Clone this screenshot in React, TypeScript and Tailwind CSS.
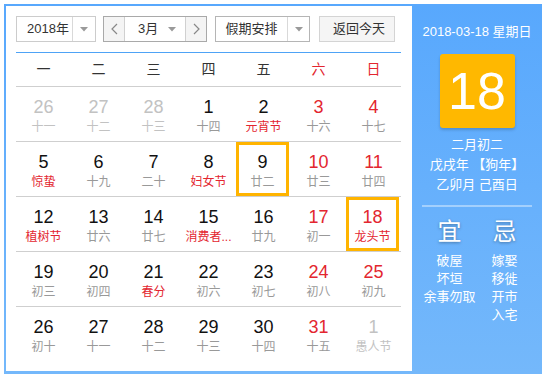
import React from "react";

type Day = {
  num: number;
  lunar: string;
  other?: boolean;
  redNum?: boolean;
  redLunar?: boolean;
  boxed?: boolean;
};

const WEEKDAYS = ["一", "二", "三", "四", "五", "六", "日"];

const ROWS: Day[][] = [
  [
    { num: 26, lunar: "十一", other: true },
    { num: 27, lunar: "十二", other: true },
    { num: 28, lunar: "十三", other: true },
    { num: 1, lunar: "十四" },
    { num: 2, lunar: "元宵节", redLunar: true },
    { num: 3, lunar: "十六", redNum: true },
    { num: 4, lunar: "十七", redNum: true },
  ],
  [
    { num: 5, lunar: "惊蛰", redLunar: true },
    { num: 6, lunar: "十九" },
    { num: 7, lunar: "二十" },
    { num: 8, lunar: "妇女节", redLunar: true },
    { num: 9, lunar: "廿二", boxed: true },
    { num: 10, lunar: "廿三", redNum: true },
    { num: 11, lunar: "廿四", redNum: true },
  ],
  [
    { num: 12, lunar: "植树节", redLunar: true },
    { num: 13, lunar: "廿六" },
    { num: 14, lunar: "廿七" },
    { num: 15, lunar: "消费者...", redLunar: true },
    { num: 16, lunar: "廿九" },
    { num: 17, lunar: "初一", redNum: true },
    { num: 18, lunar: "龙头节", redNum: true, redLunar: true, boxed: true },
  ],
  [
    { num: 19, lunar: "初三" },
    { num: 20, lunar: "初四" },
    { num: 21, lunar: "春分", redLunar: true },
    { num: 22, lunar: "初六" },
    { num: 23, lunar: "初七" },
    { num: 24, lunar: "初八", redNum: true },
    { num: 25, lunar: "初九", redNum: true },
  ],
  [
    { num: 26, lunar: "初十" },
    { num: 27, lunar: "十一" },
    { num: 28, lunar: "十二" },
    { num: 29, lunar: "十三" },
    { num: 30, lunar: "十四" },
    { num: 31, lunar: "十五", redNum: true },
    { num: 1, lunar: "愚人节", other: true },
  ],
];

function Caret() {
  return (
    <svg width="8" height="5" viewBox="0 0 8 5">
      <polygon points="0,0 8,0 4,4.5" fill="#9a9a9a" />
    </svg>
  );
}

function Chevron({ dir }: { dir: "left" | "right" }) {
  return (
    <svg width="7" height="12" viewBox="0 0 7 12">
      <polyline
        points={dir === "left" ? "6,1 1,6 6,11" : "1,1 6,6 1,11"}
        fill="none"
        stroke="#888"
        strokeWidth="1.2"
      />
    </svg>
  );
}

function DayCell({ d }: { d: Day }) {
  const numColor = d.other
    ? "text-[#c2c2c2]"
    : d.redNum
    ? "text-[#e3262f]"
    : "text-[#111]";
  const lunarColor = d.other
    ? "text-[#c2c2c2]"
    : d.redLunar
    ? "text-[#e3262f]"
    : "text-[#999]";

  return (
    <div className="w-[55px] h-[54px]">
      <div
        className={`w-[53px] h-[54px] flex flex-col items-center ${
          d.boxed ? "border-[3px] border-[#ffb400] pt-[7px]" : "pt-[10px] pl-[2px]"
        }`}
      >
        <div
          className={`text-[18px] leading-[20px] font-['Liberation_Sans',Arial,sans-serif] ${numColor}`}
        >
          {d.num}
        </div>
        <div
          className={`mt-[2px] text-[12px] leading-[16px] whitespace-nowrap ${lunarColor}`}
        >
          {d.lunar}
        </div>
      </div>
    </div>
  );
}

export default function App() {
  return (
    <div className="min-h-screen bg-white pt-[4px] pl-[4px] font-['Liberation_Sans','Noto_Sans_CJK_SC',sans-serif]">
      <div className="flex w-[538px] h-[370px] bg-gradient-to-b from-[#58a8fd] to-[#74b8fb]">
        {/* Left calendar */}
        <div className="mt-[2px] ml-[2px] w-[406px] h-[365px] bg-white px-[10px] pt-[10px]">
          {/* Controls */}
          <div className="flex h-[26px] text-[13px] text-[#333]">
            <div className="flex w-[80px] border border-[#cccccc] bg-white">
              <div className="flex w-[55px] items-center pl-[10px]">2018年</div>
              <div className="flex flex-1 items-center justify-center border-l border-[#d9d9d9]">
                <Caret />
              </div>
            </div>

            <div className="ml-[7px] flex w-[104px] border border-[#a9a9a9] bg-white">
              <div className="flex w-[21px] items-center justify-center bg-[#f4f4f4] border-r border-[#d0d0d0]">
                <Chevron dir="left" />
              </div>
              <div className="flex flex-1 items-center justify-between pl-[13px] pr-[9px]">
                <span>3月</span>
                <Caret />
              </div>
              <div className="flex w-[21px] items-center justify-center bg-[#f4f4f4] border-l border-[#d0d0d0]">
                <Chevron dir="right" />
              </div>
            </div>

            <div className="ml-[8px] flex w-[95px] border border-[#b5b5b5] bg-white">
              <div className="flex w-[71px] items-center justify-center">假期安排</div>
              <div className="flex flex-1 items-center justify-center border-l border-[#d9d9d9]">
                <Caret />
              </div>
            </div>

            <div className="ml-[9px] flex w-[76px] items-center justify-center border border-[#d4d4d4] bg-[#f5f5f5] pl-[4px]">
              返回今天
            </div>
          </div>

          {/* Blue separator */}
          <div className="mt-[10px] h-[1px] w-[385px] bg-[#4ea3f6]" />

          {/* Weekday header */}
          <div className="flex h-[34px] w-[385px] border-b border-[#cfcfcf] text-[14px]">
            {WEEKDAYS.map((w, i) => (
              <div
                key={w}
                className={`flex w-[55px] items-center justify-center ${
                  i >= 5 ? "text-[#e3262f]" : "text-[#333]"
                }`}
              >
                {w}
              </div>
            ))}
          </div>

          {/* Days */}
          {ROWS.map((row, ri) => (
            <div
              key={ri}
              className={`flex w-[385px] ${
                ri < ROWS.length - 1 ? "border-b border-[#cfcfcf]" : ""
              }`}
            >
              {row.map((d, di) => (
                <DayCell key={di} d={d} />
              ))}
            </div>
          ))}
        </div>

        {/* Right info panel */}
        <div className="flex flex-1 flex-col items-center pt-[18px] text-white">
          <div className="text-[13px] leading-[20px]">2018-03-18 星期日</div>

          <div className="mt-[12px] flex h-[74px] w-[75px] items-center justify-center rounded-[3px] bg-[#ffb800] shadow-[0_2px_3px_rgba(0,0,0,0.18)]">
            <span className="text-[52px] leading-none font-['Liberation_Sans',Arial,sans-serif]">
              18
            </span>
          </div>

          <div className="mt-[7px] flex flex-col items-center text-[13px] leading-[20px]">
            <div>二月初二</div>
            <div>戊戌年 【狗年】</div>
            <div>乙卯月 己酉日</div>
          </div>

          <div className="mt-[10px] h-[2px] w-[110px] bg-white/40" />

          <div className="mt-[10px] flex w-[110px]">
            <div className="flex w-[55px] flex-col items-center">
              <div className="text-[24px] leading-[30px] [text-shadow:0_1px_3px_rgba(0,0,0,0.35)]">
                宜
              </div>
              <div className="mt-[5px] flex flex-col items-center text-[13px] leading-[18px] whitespace-nowrap">
                <div>破屋</div>
                <div>坏垣</div>
                <div>余事勿取</div>
              </div>
            </div>
            <div className="flex w-[55px] flex-col items-center">
              <div className="text-[24px] leading-[30px] [text-shadow:0_1px_3px_rgba(0,0,0,0.35)]">
                忌
              </div>
              <div className="mt-[5px] flex flex-col items-center text-[13px] leading-[18px] whitespace-nowrap">
                <div>嫁娶</div>
                <div>移徙</div>
                <div>开市</div>
                <div>入宅</div>
              </div>
            </div>
          </div>
        </div>
      </div>
    </div>
  );
}
